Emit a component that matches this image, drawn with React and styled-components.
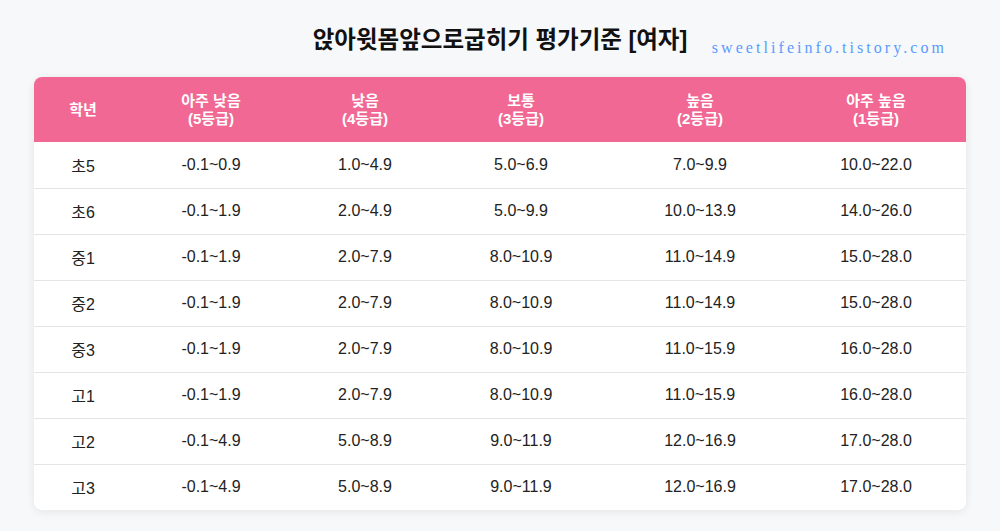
import React from "react";
import styled, { createGlobalStyle } from "styled-components";

const Global = createGlobalStyle`
  html, body { margin: 0; padding: 0; background: #f7f8fa; }
  body { font-family: "Liberation Sans", "Noto Sans CJK KR", sans-serif; }
`;

const Page = styled.div`
  position: relative;
  padding: 20px 34px 20px;
`;

const Title = styled.h1`
  margin: 0 0 17px;
  height: 40px;
  line-height: 40px;
  text-align: center;
  font-size: 23.5px;
  font-weight: 700;
  color: #111;
  font-family: "Liberation Sans", "Noto Sans CJK KR", sans-serif;
`;

const Watermark = styled.div`
  position: absolute;
  top: 39px;
  right: 53px;
  font-family: "Liberation Serif", serif;
  font-size: 16px;
  letter-spacing: 3.05px;
  color: #5a9bff;
`;

const Card = styled.div`
  background: #fff;
  border-radius: 8px;
  overflow: hidden;
  box-shadow: 0 2px 10px rgba(0, 0, 0, 0.08);
`;

const Table = styled.table`
  width: 100%;
  border-collapse: collapse;
  table-layout: fixed;
`;

const Th = styled.th`
  background: #f06893;
  color: #fff;
  font-size: 15px;
  font-weight: 700;
  line-height: 18px;
  padding: 14px 8px;
  height: 65px;
  box-sizing: border-box;
  text-align: center;
  &:last-child { padding-right: 20px; }
`;

const Td = styled.td`
  font-size: 16px;
  color: #222;
  text-align: center;
  height: 46px;
  padding: 0 8px;
  box-sizing: border-box;
  &:last-child { padding-right: 20px; }
`;

const Tr = styled.tr`
  border-top: 1px solid #e4e4e4;
  &:first-child { border-top: none; }
`;

const widths = [98, 158, 150, 162, 196, 168];
const heads = [
  ["학년"],
  ["아주 낮음", "(5등급)"],
  ["낮음", "(4등급)"],
  ["보통", "(3등급)"],
  ["높음", "(2등급)"],
  ["아주 높음", "(1등급)"],
];
const rows = [
  ["초5", "-0.1~0.9", "1.0~4.9", "5.0~6.9", "7.0~9.9", "10.0~22.0"],
  ["초6", "-0.1~1.9", "2.0~4.9", "5.0~9.9", "10.0~13.9", "14.0~26.0"],
  ["중1", "-0.1~1.9", "2.0~7.9", "8.0~10.9", "11.0~14.9", "15.0~28.0"],
  ["중2", "-0.1~1.9", "2.0~7.9", "8.0~10.9", "11.0~14.9", "15.0~28.0"],
  ["중3", "-0.1~1.9", "2.0~7.9", "8.0~10.9", "11.0~15.9", "16.0~28.0"],
  ["고1", "-0.1~1.9", "2.0~7.9", "8.0~10.9", "11.0~15.9", "16.0~28.0"],
  ["고2", "-0.1~4.9", "5.0~8.9", "9.0~11.9", "12.0~16.9", "17.0~28.0"],
  ["고3", "-0.1~4.9", "5.0~8.9", "9.0~11.9", "12.0~16.9", "17.0~28.0"],
];

export default function App() {
  return (
    <Page>
      <Global />
      <Title>앉아윗몸앞으로굽히기 평가기준 [여자]</Title>
      <Watermark>sweetlifeinfo.tistory.com</Watermark>
      <Card>
        <Table>
          <colgroup>
            {widths.map((w, i) => (
              <col key={i} style={{ width: w }} />
            ))}
          </colgroup>
          <thead>
            <tr>
              {heads.map((h, i) => (
                <Th key={i}>
                  {h.map((l, j) => (
                    <React.Fragment key={j}>
                      {j > 0 && <br />}
                      {l}
                    </React.Fragment>
                  ))}
                </Th>
              ))}
            </tr>
          </thead>
          <tbody>
            {rows.map((r, i) => (
              <Tr key={i}>
                {r.map((c, j) => (
                  <Td key={j}>{c}</Td>
                ))}
              </Tr>
            ))}
          </tbody>
        </Table>
      </Card>
    </Page>
  );
}
